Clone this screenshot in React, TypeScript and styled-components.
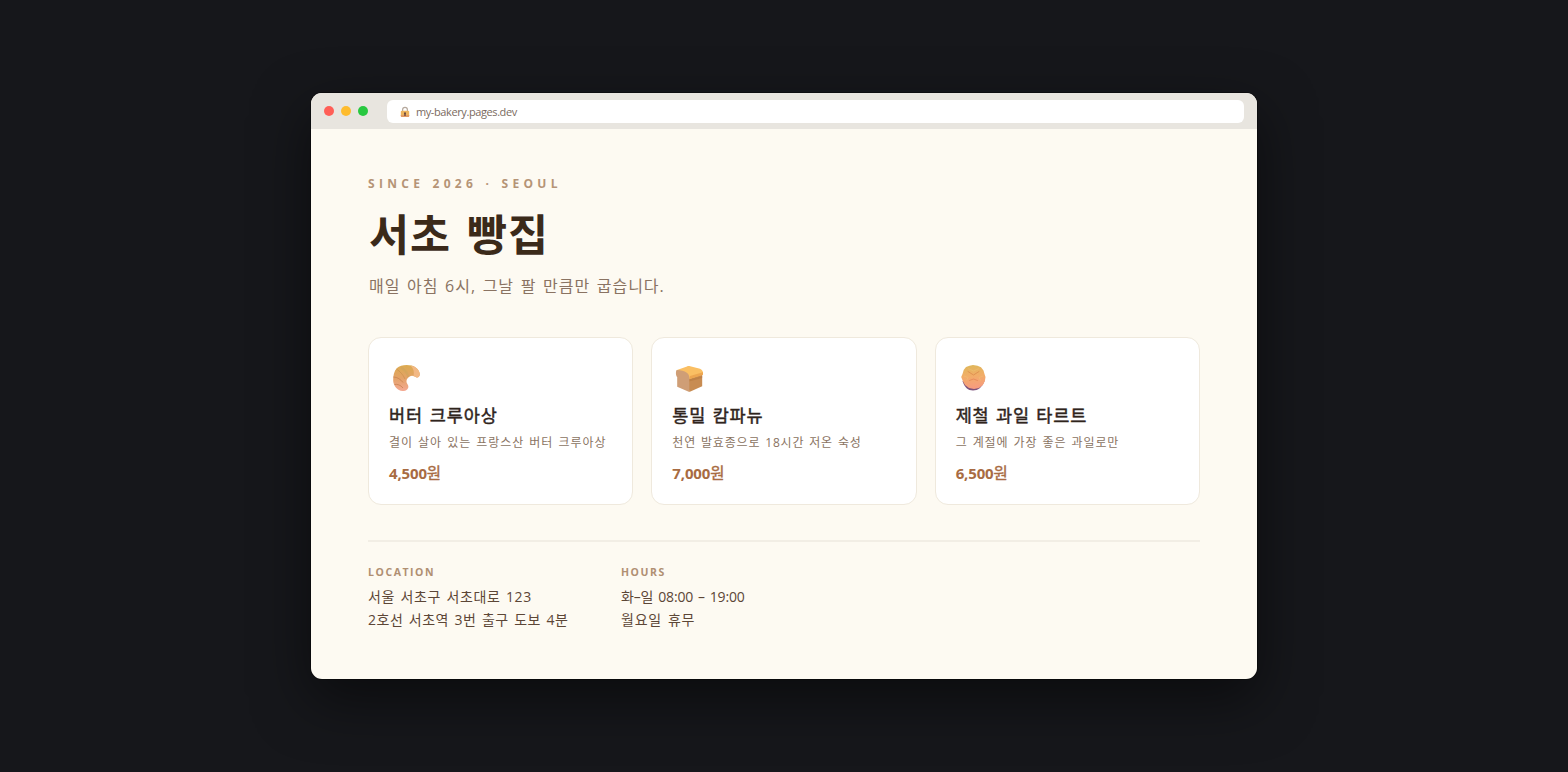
import React from 'react';
import styled, { createGlobalStyle } from 'styled-components';

const GlobalStyle = createGlobalStyle`
  * { box-sizing: border-box; }
  html, body { margin: 0; padding: 0; background: #16171b; }
  body { font-family: "Open Sans", "Noto Sans CJK KR", sans-serif; }
  h1, h2, p { margin: 0; font-weight: inherit; }
`;

const Stage = styled.main`
  width: 100%;
  height: 772px;
  padding-top: 93px;
  display: flex;
  justify-content: center;
  align-items: flex-start;
  overflow: hidden;
`;

const Browser = styled.section`
  width: 946px;
  height: 586px;
  border-radius: 11px;
  overflow: hidden;
  background: #fdfaf2;
  box-shadow: 0 0 0 1px rgba(0, 0, 0, 0.35), 0 20px 56px rgba(0, 0, 0, 0.5);
`;

const TitleBar = styled.header`
  height: 36px;
  padding: 0 13px;
  display: flex;
  align-items: center;
  background: #e8e5df;
`;

const Lights = styled.div`
  display: flex;
  gap: 7.2px;
  margin-right: 18.6px;
`;

const Light = styled.span<{ $color: string }>`
  width: 10px;
  height: 10px;
  border-radius: 50%;
  background: ${(p) => p.$color};
`;

const AddressBar = styled.div`
  flex: 1;
  height: 23px;
  padding-left: 13px;
  border-radius: 6px;
  display: flex;
  align-items: center;
  gap: 6px;
  background: #fff;
`;

const Url = styled.span`
  font-size: 11px;
  line-height: 22px;
  letter-spacing: -0.4px;
  color: #7a6a60;
  padding-top: 1px;
`;

const Page = styled.div`
  padding: 46px 57px 0;
`;

const Since = styled.p`
  font-size: 12px;
  font-weight: 700;
  line-height: 18px;
  letter-spacing: 4.3px;
  word-spacing: 0.9px;
  color: #b59476;
`;

const Heading = styled.h1`
  margin-top: 10px;
  padding-left: 1px;
  font-size: 43.5px;
  font-weight: 700;
  line-height: 64px;
  letter-spacing: 0.9px;
  word-spacing: 4px;
  color: #3b2a1a;
`;

const Tagline = styled.p`
  margin-top: 7px;
  padding-left: 1px;
  font-size: 16px;
  line-height: 24px;
  letter-spacing: 0.98px;
  word-spacing: 1.5px;
  color: #8a7362;
`;

const Cards = styled.div`
  margin-top: 38.5px;
  display: grid;
  grid-template-columns: repeat(3, 1fr);
  gap: 18px;
`;

const Card = styled.article`
  height: 168px;
  padding: 26px 20px 0;
  border: 1px solid #efe9dd;
  border-radius: 13px;
  background: #fff;
`;

const Pastry = styled.svg`
  display: block;
  width: 36px;
  height: 30px;
`;

const Name = styled.h2<{ $spacing: number }>`
  margin-top: 8px;
  font-size: 17.5px;
  font-weight: 400;
  -webkit-text-stroke: 0.45px currentColor;
  line-height: 26px;
  letter-spacing: ${(p) => p.$spacing}px;
  word-spacing: 1.2px;
  color: #2f241c;
  white-space: nowrap;
`;

const Description = styled.p<{ $spacing: number }>`
  margin-top: 5px;
  font-size: 12px;
  line-height: 20px;
  letter-spacing: ${(p) => p.$spacing}px;
  word-spacing: 1px;
  color: #8a7362;
  white-space: nowrap;
`;

const Price = styled.p`
  margin-top: 8px;
  font-size: 15px;
  font-weight: 700;
  line-height: 24px;
  letter-spacing: -0.15px;
  color: #a86b42;
`;

const Won = styled.span`
  font-size: 15.5px;
  font-weight: 400;
  -webkit-text-stroke: 0.4px currentColor;
`;

const Info = styled.footer`
  margin-top: 35.5px;
  padding-top: 21px;
  border-top: 2px solid #f2eee5;
  display: flex;
`;

const InfoColumn = styled.div<{ $width: number }>`
  width: ${(p) => p.$width}px;
`;

const InfoLabel = styled.p`
  font-size: 10.5px;
  font-weight: 700;
  line-height: 18px;
  letter-spacing: 1.55px;
  color: #b08f72;
  margin-bottom: 4px;
`;

const InfoLine = styled.p<{ $spacing: number }>`
  font-size: 14px;
  line-height: 23px;
  letter-spacing: ${(p) => p.$spacing}px;
  word-spacing: 1.4px;
  color: #5c4636;
  white-space: nowrap;
`;

const LockIcon = () => (
  <svg width="10" height="13" viewBox="0 -1 10 13">
    <path d="M2.600 6V3.700a2.400 2.400 0 0 1 4.800 0V6" fill="none" stroke="#b5a89c" strokeWidth="1.2" />
    <rect x="0.800" y="4.800" width="8.400" height="6.200" rx="1" fill="#edb45c" />
    <path d="M0.800 9h8.400v1a1 1 0 0 1-1 1H1.800a1 1 0 0 1-1-1z" fill="#e29a62" />
    <path d="M5 6.200a1 1 0 0 1 .6 1.800l.3 1.700H4.100L4.400 8A1 1 0 0 1 5 6.200z" fill="#5d3c3c" />
  </svg>
);

const Croissant = () => (
  <Pastry viewBox="0 0 36 30">
    <defs>
      <linearGradient id="crust" x1="0.4" y1="0" x2="0.4" y2="1">
        <stop offset="0" stopColor="#dcab50" />
        <stop offset="0.5" stopColor="#e3a267" />
        <stop offset="1" stopColor="#f4a993" />
      </linearGradient>
    </defs>
    <path d="M8 4C11 1 17.500.4 22.500 1.500c4.500 1 8 5 8.300 8.500.1 2.500-1.800 4-3.600 3.300-1.600-.6-2.700-1.500-4.200-1.500-2.500.2-5.200 2.700-5.500 5.200-.3 2.500 2.500 4 1.800 6.500-.8 2.500-2.800 4-5.800 3.500C8.500 26.500 4.500 22 4.200 17 4 12 5 7 8 4z" fill="url(#crust)" />
    <path d="M21.500 1.500c5 .8 9 4.500 9.300 8.500.1 2.500-1.800 4-3.600 3.300-1-.4-1.800-.9-2.700-1.200C25.500 8 24.500 4 21.500 1.500z" fill="#f2b884" />
    <path d="M4.400 13c3.800 0 7.500 2.500 9.600 5.500M5.500 20.500c3-.6 6 .5 8.500 3.500" fill="none" stroke="#c98250" strokeWidth="0.8" />
    <path d="M7.500 5c3.500 2.500 6.500 5.500 8.500 10" fill="none" stroke="#c58a48" strokeWidth="0.8" opacity="0.7" />
    <path d="M12 3.500c3 1.500 6 5 7.500 9.500" fill="none" stroke="#cfa55c" strokeWidth="2.200" opacity="0.6" />
  </Pastry>
);

const Loaf = () => (
  <Pastry viewBox="0 0 36 30">
    <path d="M15.500 14.500 30.200 10.500v11.800L17.300 28z" fill="#c88c52" />
    <path d="M17 15.500 30.200 12v2L17 17.500z" fill="#b8793f" opacity="0.6" />
    <path d="M4.300 6.200 15 2.400c1-.4 2-.4 3.200-.1L28 4.800c2.400.8 3.400 3.200 2.900 5.700L17.500 15 13 10z" fill="#fabf63" />
    <path d="M18 12 31 8.300c.1 1 0 1.900-.2 2.700L17.300 15z" fill="#eda650" />
    <path d="M4.800 5.900c4 0 7.600.9 10 2.800 2.200 1.600 2.900 4.100 2.500 7.300v12L5.200 22.800V13C3.600 11.500 3.600 7 4.800 5.900z" fill="#cf9e76" />
  </Pastry>
);

const Tart = () => (
  <Pastry viewBox="0 0 36 30">
    <defs>
      <linearGradient id="glaze" x1="0.4" y1="0" x2="0.5" y2="1">
        <stop offset="0" stopColor="#dfb75a" />
        <stop offset="0.45" stopColor="#f2ad68" />
        <stop offset="1" stopColor="#f79a80" />
      </linearGradient>
    </defs>
    <path d="M6.500 17c2 6.500 5.500 9.500 10.500 9.500S26 23.500 28.500 17z" fill="#7d527b" />
    <path d="M10 3 13.500 1.700l3.500-.7 4.500.7L25 3.200 27.500 6.500l1 3.500 1 3-.6 4-2 4-3.900 3-5 1-5-1L9 21 6.800 17 5.200 13l1.300-3L7.700 6z" fill="url(#glaze)" />
    <path d="m12 7.500 5.500 3.500 5.500-3.500" fill="none" stroke="#d98549" strokeWidth="1" strokeLinecap="round" opacity="0.7" />
    <path d="M13.500 16.500l4-1.500 4 1.500" fill="none" stroke="#e27f52" strokeWidth="1" strokeLinecap="round" opacity="0.65" />
    <path d="m8 12 4 1.500-1.500 3M27 12l-4 1.500 1.500 3M12 4.500l5.500 2.500 5.500-2.500" fill="none" stroke="#efc173" strokeWidth="1" opacity="0.5" />
  </Pastry>
);

const products = [
  { icon: <Croissant />, name: '버터 크루아상', nameSpacing: 0.9, text: '결이 살아 있는 프랑스산 버터 크루아상', textSpacing: 0.96, price: '4,500' },
  { icon: <Loaf />, name: '통밀 캄파뉴', nameSpacing: 0.8, text: '천연 발효종으로 18시간 저온 숙성', textSpacing: 0.82, price: '7,000' },
  { icon: <Tart />, name: '제철 과일 타르트', nameSpacing: 0.8, text: '그 계절에 가장 좋은 과일로만', textSpacing: 0.92, price: '6,500' },
];

const details = [
  { label: 'LOCATION', width: 253, lines: [{ text: '서울 서초구 서초대로 123', spacing: 0.58 }, { text: '2호선 서초역 3번 출구 도보 4분', spacing: 0.5 }] },
  { label: 'HOURS', width: 200, lines: [{ text: '화–일 08:00 – 19:00', spacing: -0.15 }, { text: '월요일 휴무', spacing: 0.8 }] },
];

export default function App() {
  return (
    <>
      <GlobalStyle />
      <Stage>
        <Browser>
          <TitleBar>
            <Lights>
              <Light $color="#ff5f57" />
              <Light $color="#febc2e" />
              <Light $color="#28c840" />
            </Lights>
            <AddressBar>
              <LockIcon />
              <Url>my-bakery.pages.dev</Url>
            </AddressBar>
          </TitleBar>
          <Page>
            <Since>SINCE 2026 · SEOUL</Since>
            <Heading>서초 빵집</Heading>
            <Tagline>매일 아침 6시, 그날 팔 만큼만 굽습니다.</Tagline>
            <Cards>
              {products.map((item) => (
                <Card key={item.name}>
                  {item.icon}
                  <Name $spacing={item.nameSpacing}>{item.name}</Name>
                  <Description $spacing={item.textSpacing}>{item.text}</Description>
                  <Price>{item.price}<Won>원</Won></Price>
                </Card>
              ))}
            </Cards>
            <Info>
              {details.map((column) => (
                <InfoColumn key={column.label} $width={column.width}>
                  <InfoLabel>{column.label}</InfoLabel>
                  {column.lines.map((line) => (
                    <InfoLine key={line.text} $spacing={line.spacing}>{line.text}</InfoLine>
                  ))}
                </InfoColumn>
              ))}
            </Info>
          </Page>
        </Browser>
      </Stage>
    </>
  );
}
